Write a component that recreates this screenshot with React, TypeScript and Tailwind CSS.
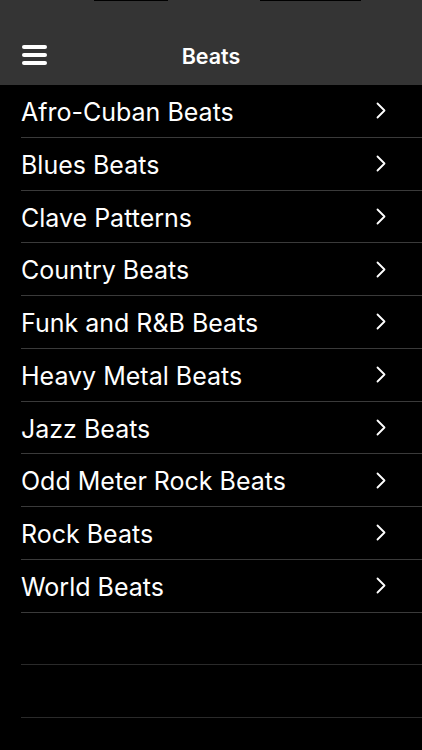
const categories = [
  "Afro-Cuban Beats",
  "Blues Beats",
  "Clave Patterns",
  "Country Beats",
  "Funk and R&B Beats",
  "Heavy Metal Beats",
  "Jazz Beats",
  "Odd Meter Rock Beats",
  "Rock Beats",
  "World Beats",
];

function Chevron() {
  return (
    <svg width="10" height="17" viewBox="0 0 10 17" fill="none" className="shrink-0">
      <path d="M1.5 1.5 8.5 8.5 1.5 15.5" stroke="white" strokeWidth="1.8" strokeLinecap="round" strokeLinejoin="round" />
    </svg>
  );
}

export default function App() {
  return (
    <div
      className="w-[422px] h-[750px] overflow-hidden bg-black text-white"
      style={{ fontFamily: "Inter, 'Liberation Sans', sans-serif" }}
    >
      {/* Header */}
      <div className="relative h-[85px] bg-[#343434]">
        <div className="absolute top-0 left-[94px] w-[74px] h-[1px] bg-black" />
        <div className="absolute top-0 left-[260px] w-[101px] h-[1px] bg-black" />
        <div className="flex items-center h-full pt-[27px] px-[22px]">
          <div className="flex flex-col gap-[4.5px] w-[25px] -mt-[2px]">
            <span className="block h-[3.5px] rounded-full bg-white" />
            <span className="block h-[3.5px] rounded-full bg-white" />
            <span className="block h-[3.5px] rounded-full bg-white" />
          </div>
          <h1 className="flex-1 text-center text-[21.5px] font-semibold pr-[25px]">Beats</h1>
        </div>
      </div>

      {/* List */}
      <ul>
        {categories.map((name) => (
          <li key={name} className="pl-[21px]">
            <div className="flex items-center h-[52.75px] pr-[36px] border-b border-[#3a3a3a]">
              <span className="flex-1 pt-[4px] text-[25px] font-normal">{name}</span>
              <Chevron />
            </div>
          </li>
        ))}
        <li className="pl-[21px]">
          <div className="h-[52.75px] border-b border-[#2a2a2a]" />
        </li>
        <li className="pl-[21px]">
          <div className="h-[52.75px] border-b border-[#2a2a2a]" />
        </li>
      </ul>
    </div>
  );
}
